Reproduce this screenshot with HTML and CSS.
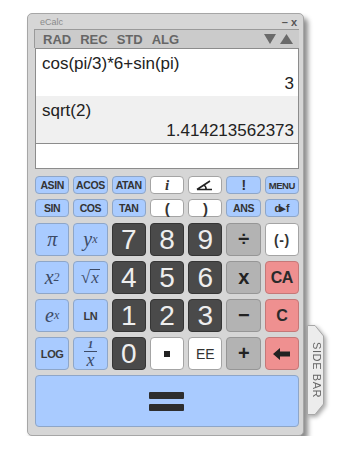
FILE: index.html
```html
<!DOCTYPE html>
<html lang="en">
<head>
    <meta charset="UTF-8">
    <meta name="viewport" content="width=device-width, initial-scale=1.0">
    <title>eCalc</title>
    <link rel="stylesheet" href="styles.css">
</head>
<body>
    <div class="window">
        <div class="titlebar">
            <span class="app-name">eCalc</span>
            <span class="win-ctrl">&ndash; x</span>
        </div>
        <div class="toolbar">
            <span>RAD</span><span>REC</span><span>STD</span><span>ALG</span>
            <span class="arrows">
                <svg width="12" height="10" viewBox="0 0 12 10"><polygon points="0,0 12,0 6,10" fill="#6a6a6a"/></svg>
                <svg width="13" height="10" viewBox="0 0 13 10"><polygon points="0,10 13,10 6.5,0" fill="#6a6a6a"/></svg>
            </span>
        </div>

        <div class="display">
            <div class="entry">
                <div class="expr">cos(pi/3)*6+sin(pi)</div>
                <div class="res">3</div>
            </div>
            <div class="entry alt">
                <div class="expr">sqrt(2)</div>
                <div class="res">1.414213562373</div>
            </div>
            <div class="input"></div>
        </div>

        <div class="keys small">
            <div class="key blue">ASIN</div>
            <div class="key blue">ACOS</div>
            <div class="key blue">ATAN</div>
            <div class="key white ital">i</div>
            <div class="key white">
                <svg width="20" height="12" viewBox="0 0 20 12"><path d="M2 10.5 L17 10.5 M2 10.5 L15 2 M9 6 Q11.5 8 11 10.5" stroke="#222" stroke-width="1.6" fill="none"/></svg>
            </div>
            <div class="key blue big-bang">!</div>
            <div class="key blue menu">MENU</div>

            <div class="key blue">SIN</div>
            <div class="key blue">COS</div>
            <div class="key blue">TAN</div>
            <div class="key white paren">(</div>
            <div class="key white paren">)</div>
            <div class="key blue">ANS</div>
            <div class="key blue">d&#9656;f</div>
        </div>

        <div class="keys main">
            <div class="key blue fn">&pi;</div>
            <div class="key blue fn">y<sup>x</sup></div>
            <div class="key dark">7</div>
            <div class="key dark">8</div>
            <div class="key dark">9</div>
            <div class="key gray op">&divide;</div>
            <div class="key white neg">(-)</div>

            <div class="key blue fn">x<sup>2</sup></div>
            <div class="key blue fn sqrt">&radic;<span class="over">x</span></div>
            <div class="key dark">4</div>
            <div class="key dark">5</div>
            <div class="key dark">6</div>
            <div class="key gray op">x</div>
            <div class="key red">CA</div>

            <div class="key blue fn">e<sup>x</sup></div>
            <div class="key blue lbl">LN</div>
            <div class="key dark">1</div>
            <div class="key dark">2</div>
            <div class="key dark">3</div>
            <div class="key gray op">&minus;</div>
            <div class="key red">C</div>

            <div class="key blue lbl">LOG</div>
            <div class="key blue frac"><span class="num">1</span><span class="den">x</span></div>
            <div class="key dark">0</div>
            <div class="key white"><span class="dot"></span></div>
            <div class="key white ee">EE</div>
            <div class="key gray op">+</div>
            <div class="key red">
                <svg width="18" height="12" viewBox="0 0 18 12"><polygon points="0,6 7,0 7,3.5 17,3.5 17,8.5 7,8.5 7,12" fill="#222"/></svg>
            </div>

            <div class="key blue equals">
                <span class="bar"></span>
                <span class="bar"></span>
            </div>
        </div>

        <div class="sidebar">
            <svg width="18" height="90" viewBox="0 0 18 90"><polygon points="0.5,0.5 8,0.5 16.5,11 16.5,79 8,89.5 0.5,89.5" fill="#ececec" stroke="#a8a8a8"/></svg>
            <span class="sidebar-text">SIDE BAR</span>
        </div>
    </div>
</body>
</html>
```

FILE: styles.css
```css
body {
    margin: 0;
    background: #fff;
    font-family: "Liberation Sans", Arial, sans-serif;
}
.window {
    position: relative;
    margin: 13px 0 0 27px;
    width: 277px;
    height: 423px;
    box-sizing: border-box;
    padding: 0 4px 0 6px;
    background: #d6d6d6;
    border: 1px solid #a6a6a6;
    border-radius: 5px;
    box-shadow: 4px 5px 5px rgba(0, 0, 0, 0.45);
}
.titlebar {
    height: 15px;
    display: flex;
    justify-content: space-between;
    align-items: center;
    padding: 0 2px 0 6px;
    font-size: 9px;
    color: #8a8a8a;
}
.win-ctrl {
    font-size: 11px;
    color: #555;
    font-weight: bold;
}
.toolbar {
    height: 18px;
    display: flex;
    align-items: center;
    gap: 9px;
    padding-left: 8px;
    background: #cbcbcb;
    border-top: 1px solid #9a9a9a;
    border-left: 1px solid #9a9a9a;
    font-size: 13px;
    font-weight: bold;
    color: #666;
}
.arrows {
    margin-left: auto;
    display: flex;
    gap: 4px;
    padding-right: 6px;
}
.display {
    margin-left: 1px;
    background: #fff;
    border: 1px solid #8c8c8c;
}
.entry {
    height: 47px;
    box-sizing: border-box;
    padding: 5px 4px 0 6px;
    font-size: 17px;
    line-height: 20px;
    color: #222;
}
.entry.alt {
    background: #f0f0f0;
}
.res {
    text-align: right;
}
.input {
    height: 24px;
    border-top: 1px solid #8c8c8c;
}
.keys {
    display: grid;
    grid-template-columns: repeat(7, 1fr);
    column-gap: 4px;
    margin-left: 1px;
}
.keys.small {
    margin-top: 7px;
    grid-auto-rows: 18px;
    row-gap: 5px;
}
.keys.main {
    margin-top: 6px;
    grid-auto-rows: 33px;
    row-gap: 5px;
}
.key {
    display: flex;
    justify-content: center;
    align-items: center;
    box-sizing: border-box;
    border-radius: 4px;
    font-size: 10.5px;
    font-weight: bold;
    letter-spacing: -0.4px;
    color: #333;
}
.blue {
    background: #a9cbff;
    border: 1px solid #8ea6c8;
}
.white {
    background: #fff;
    border: 1px solid #a4a4a4;
}
.dark {
    background: #4a4a4a;
    border: 1px solid #353535;
    color: #eee;
    font-size: 28px;
    font-weight: normal;
    letter-spacing: 0;
}
.gray {
    background: #b3b3b3;
    border: 1px solid #969696;
}
.red {
    background: #ef9090;
    border: 1px solid #c57878;
    font-size: 16px;
    color: #2a2a2a;
}
.ital {
    font-family: "Liberation Serif", serif;
    font-style: italic;
    font-size: 15px;
}
.big-bang {
    font-size: 14px;
}
.menu {
    font-size: 9.5px;
}
.paren {
    font-size: 15px;
}
.fn {
    font-family: "Liberation Serif", serif;
    font-style: italic;
    font-weight: normal;
    font-size: 20px;
    color: #3c4a66;
    letter-spacing: 0;
}
.fn sup {
    font-size: 12px;
    vertical-align: 7px;
}
.sqrt {
    font-size: 17px;
}
.over {
    border-top: 1.5px solid #3c4a66;
    line-height: 16px;
    padding: 0 1px;
}
.lbl {
    font-size: 11px;
    color: #3a3a3a;
}
.frac {
    flex-direction: column;
    font-family: "Liberation Serif", serif;
    font-style: italic;
    font-weight: normal;
    color: #3c4a66;
    letter-spacing: 0;
}
.frac .num {
    font-size: 11px;
    line-height: 11px;
    font-weight: bold;
    padding: 0 4px 1px;
    border-bottom: 1.5px solid #3c4a66;
}
.frac .den {
    font-size: 18px;
    line-height: 16px;
}
.op {
    font-size: 20px;
    color: #222;
}
.neg {
    font-size: 14px;
    letter-spacing: 0.5px;
}
.ee {
    font-size: 14px;
    font-weight: normal;
    letter-spacing: 0;
}
.dot {
    width: 6px;
    height: 6px;
    background: #222;
}
.equals {
    grid-column: 1 / -1;
    height: 52px;
    flex-direction: column;
    gap: 5px;
}
.bar {
    width: 35px;
    height: 7px;
    background: #2e2e2e;
    border-radius: 1px;
}
.sidebar {
    position: absolute;
    left: 279px;
    top: 311px;
    width: 18px;
    height: 90px;
    filter: drop-shadow(2px 2px 2px rgba(0, 0, 0, 0.35));
}
.sidebar svg {
    display: block;
}
.sidebar-text {
    position: absolute;
    left: 1px;
    top: 14px;
    width: 15px;
    height: 62px;
    writing-mode: vertical-rl;
    text-align: center;
    font-size: 11px;
    letter-spacing: 0.6px;
    color: #666;
}
```
